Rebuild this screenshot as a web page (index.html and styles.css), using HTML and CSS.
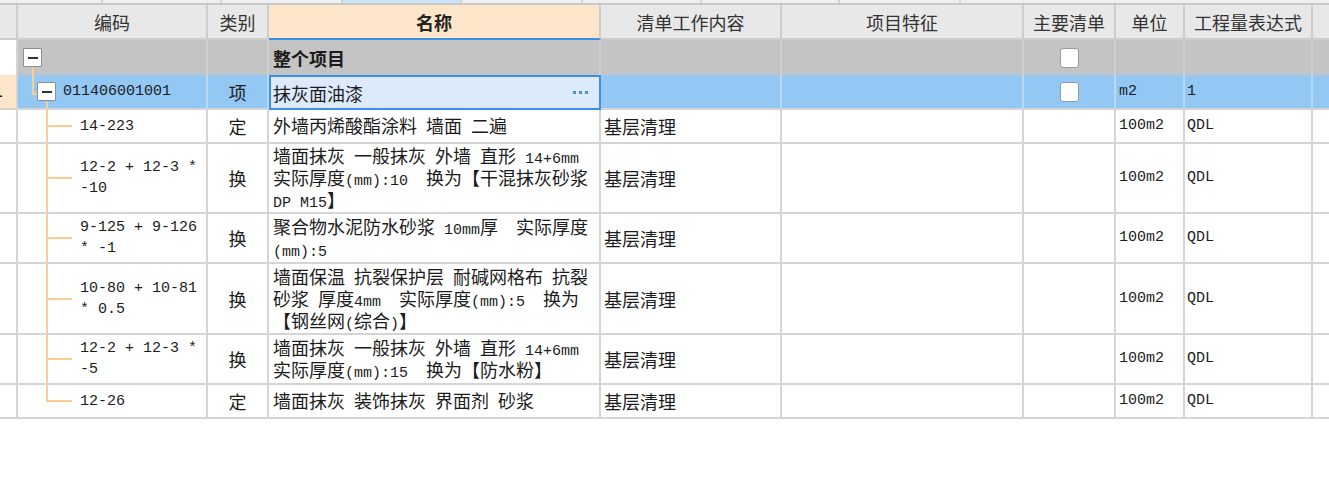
FILE: index.html
```html
<!DOCTYPE html>
<html lang="zh-CN">
<head>
<meta charset="utf-8">
<title>清单</title>
<link rel="stylesheet" href="styles.css">
</head>
<body>
<div class="topstrip">
  <span class="seg w103"></span><span class="seg w119"></span><span class="seg w121"></span><span class="seg w119 on"></span><span class="seg w121"></span><span class="seg w119"></span><span class="seg w138"></span><span class="seg w121"></span><span class="seg rest"></span>
</div>
<div class="topline"></div>

<div class="row hd">
  <div class="c"></div>
  <div class="c">编码</div>
  <div class="c">类别</div>
  <div class="c act">名称</div>
  <div class="c">清单工作内容</div>
  <div class="c">项目特征</div>
  <div class="c">主要清单</div>
  <div class="c">单位</div>
  <div class="c">工程量表达式</div>
  <div class="c"></div>
</div>

<div class="row root h35">
  <div class="c idx"></div>
  <div class="c code"><span class="box"></span></div>
  <div class="c"></div>
  <div class="c name bold">整个项目</div>
  <div class="c"></div>
  <div class="c"></div>
  <div class="c mid"><span class="chk"></span></div>
  <div class="c"></div>
  <div class="c"></div>
  <div class="c"></div>
</div>

<div class="row sel h35">
  <div class="c idx"><span class="num">1</span></div>
  <div class="c code"><span class="box"></span><span class="m code-no">011406001001</span></div>
  <div class="c mid">项</div>
  <div class="c edit"><span>抹灰面油漆</span><span class="dots"><i></i><i></i><i></i></span></div>
  <div class="c"></div>
  <div class="c"></div>
  <div class="c mid"><span class="chk"></span></div>
  <div class="c unit m">m2</div>
  <div class="c expr m">1</div>
  <div class="c"></div>
</div>

<div class="row kid h34">
  <div class="c idx"></div>
  <div class="c code"><span class="m">14-223</span></div>
  <div class="c mid">定</div>
  <div class="c name"><span>外墙丙烯酸酯涂料<span class="m"> </span>墙面<span class="m"> </span>二遍</span></div>
  <div class="c work">基层清理</div>
  <div class="c"></div>
  <div class="c"></div>
  <div class="c unit m">100m2</div>
  <div class="c expr m">QDL</div>
  <div class="c"></div>
</div>

<div class="row kid h70">
  <div class="c idx"></div>
  <div class="c code"><span class="m">12-2 + 12-3 *<br>-10</span></div>
  <div class="c mid">换</div>
  <div class="c name"><span>墙面抹灰<span class="m"> </span>一般抹灰<span class="m"> </span>外墙<span class="m"> </span>直形<span class="m"> 14+6mm</span><br>实际厚度<span class="m">(mm):10  </span>换为【干混抹灰砂浆<br><span class="m">DP M15</span>】</span></div>
  <div class="c work">基层清理</div>
  <div class="c"></div>
  <div class="c"></div>
  <div class="c unit m">100m2</div>
  <div class="c expr m">QDL</div>
  <div class="c"></div>
</div>

<div class="row kid h50">
  <div class="c idx"></div>
  <div class="c code"><span class="m">9-125 + 9-126<br>* -1</span></div>
  <div class="c mid">换</div>
  <div class="c name"><span>聚合物水泥防水砂浆<span class="m"> 10mm</span>厚<span class="m">  </span>实际厚度<br><span class="m">(mm):5</span></span></div>
  <div class="c work">基层清理</div>
  <div class="c"></div>
  <div class="c"></div>
  <div class="c unit m">100m2</div>
  <div class="c expr m">QDL</div>
  <div class="c"></div>
</div>

<div class="row kid h71">
  <div class="c idx"></div>
  <div class="c code"><span class="m">10-80 + 10-81<br>* 0.5</span></div>
  <div class="c mid">换</div>
  <div class="c name"><span>墙面保温<span class="m"> </span>抗裂保护层<span class="m"> </span>耐碱网格布<span class="m"> </span>抗裂<br>砂浆<span class="m"> </span>厚度<span class="m">4mm  </span>实际厚度<span class="m">(mm):5  </span>换为<br>【钢丝网<span class="m">(</span>综合<span class="m">)</span>】</span></div>
  <div class="c work">基层清理</div>
  <div class="c"></div>
  <div class="c"></div>
  <div class="c unit m">100m2</div>
  <div class="c expr m">QDL</div>
  <div class="c"></div>
</div>

<div class="row kid h50">
  <div class="c idx"></div>
  <div class="c code"><span class="m">12-2 + 12-3 *<br>-5</span></div>
  <div class="c mid">换</div>
  <div class="c name"><span>墙面抹灰<span class="m"> </span>一般抹灰<span class="m"> </span>外墙<span class="m"> </span>直形<span class="m"> 14+6mm</span><br>实际厚度<span class="m">(mm):15  </span>换为【防水粉】</span></div>
  <div class="c work">基层清理</div>
  <div class="c"></div>
  <div class="c"></div>
  <div class="c unit m">100m2</div>
  <div class="c expr m">QDL</div>
  <div class="c"></div>
</div>

<div class="row kid last h34">
  <div class="c idx"></div>
  <div class="c code"><span class="m">12-26</span></div>
  <div class="c mid">定</div>
  <div class="c name"><span>墙面抹灰<span class="m"> </span>装饰抹灰<span class="m"> </span>界面剂<span class="m"> </span>砂浆</span></div>
  <div class="c work">基层清理</div>
  <div class="c"></div>
  <div class="c"></div>
  <div class="c unit m">100m2</div>
  <div class="c expr m">QDL</div>
  <div class="c"></div>
</div>
</body>
</html>
```

FILE: styles.css
```css
* { box-sizing: border-box; }
html, body { margin: 0; padding: 0; background: #fff; }
body {
  width: 1329px;
  height: 477px;
  overflow: hidden;
  font-family: "Noto Sans CJK SC", "Noto Sans", sans-serif;
  font-size: 18px;
  color: #1c1c1c;
}

/* top strip */
.topstrip { display: flex; height: 3px; background: #f0f0f0; }
.topstrip .seg { height: 3px; border-right: 2px solid #d4d4d4; }
.topstrip .seg.on { background: #cde4f8; }
.topstrip .w103 { width: 103px; }
.topstrip .w119 { width: 119px; }
.topstrip .w121 { width: 121px; }
.topstrip .w138 { width: 138px; }
.topstrip .rest { flex: 1; border-right: none; }
.topline { height: 2px; background: #c8c8c8; }

/* grid rows */
.row {
  display: grid;
  grid-template-columns: 18px 190px 61px 332px 181px 242px 92px 69px 128px 1fr;
}
.h34 { height: 34px; }
.h35 { height: 35px; }
.h50 { height: 50px; }
.h70 { height: 70px; }
.h71 { height: 71px; }

.c {
  display: flex;
  align-items: center;
  min-width: 0;
  overflow: hidden;
  white-space: pre;
  line-height: 20px;
  border-right: 2px solid #d5d5d5;
  border-bottom: 2px solid #d5d5d5;
}
.c:last-child { border-right: none; }

.m { font-family: "Liberation Mono", monospace; font-size: 15px; }
.name .m { line-height: 1; }
.bold { font-weight: 700; }
.mid { justify-content: center; }

/* header */
.hd { height: 35px; }
.hd .c {
  justify-content: center;
  background: #e8e8e8;
  color: #333;
  border-color: #cdcdcd;
}
.hd .c.act {
  background: #fde6ca;
  font-weight: 700;
  color: #222;
  border-bottom: 2px solid #3d8ee6;
}

/* root row */
.root .c { background: #c4c4c4; border-bottom: none; border-right-color: #cfcfcf; }
.root .c.idx { background: #fff; border-right-color: #d5d5d5; }

/* selected row */
.sel .c { background: #93c8f4; border-right-color: #b9d9f5; }
.sel .c.idx { background: #fde6ca; border-right-color: #d5d5d5; }
.sel .c.edit {
  background: #dceafc;
  border: 2px solid #3d8ee6;
  justify-content: space-between;
  padding: 0 11px 0 2px;
}
.num { font-weight: 700; margin-left: -6px; font-family: "Liberation Sans", sans-serif; font-size: 15px; color: #111; }
.dots { display: flex; gap: 3px; }
.dots i { display: block; width: 3px; height: 3px; background: #4a8fdc; }

/* cells */
.name { padding-left: 4px; }
.work { padding-left: 3px; }
.unit { padding-left: 3px; }
.expr { padding-left: 2px; }
.code { position: relative; }
.root .code { padding-left: 5px; }
.sel .code { padding-left: 19px; }
.kid .code { padding-left: 62px; line-height: 21px; }
.code-no { margin-left: 7px; }

/* tree expander box */
.box {
  position: relative;
  width: 19px;
  height: 19px;
  flex: none;
  background: #fff;
  border: 1px solid #8e8e8e;
  border-radius: 1px;
  display: flex;
  align-items: center;
  justify-content: center;
  z-index: 1;
}
.box::before {
  content: "";
  width: 10px;
  height: 2px;
  background: #333;
}

/* tree connectors */
.root .code::after {
  content: "";
  position: absolute;
  left: 14px;
  top: 27px;
  bottom: 0;
  width: 2px;
  background: #fbcd96;
}
.sel .code::before {
  content: "";
  position: absolute;
  left: 14px;
  top: 0;
  width: 6px;
  height: 18px;
  border-left: 2px solid #fbcd96;
  border-bottom: 2px solid #fbcd96;
}
.sel .code::after {
  content: "";
  position: absolute;
  left: 28px;
  top: 27px;
  bottom: -2px;
  width: 2px;
  background: #fbcd96;
}
.kid .code::before {
  content: "";
  position: absolute;
  left: 28px;
  top: 0;
  bottom: -2px;
  width: 2px;
  background: #fbcd96;
}
.kid.last .code::before { bottom: 50%; margin-bottom: -1px; }
.kid .code::after {
  content: "";
  position: absolute;
  left: 28px;
  top: 50%;
  margin-top: -1px;
  width: 26px;
  height: 2px;
  background: #fbcd96;
}

/* checkbox */
.chk {
  display: block;
  width: 19px;
  height: 20px;
  background: #fff;
  border: 1px solid #9a9a9a;
  border-radius: 3px;
}
```
